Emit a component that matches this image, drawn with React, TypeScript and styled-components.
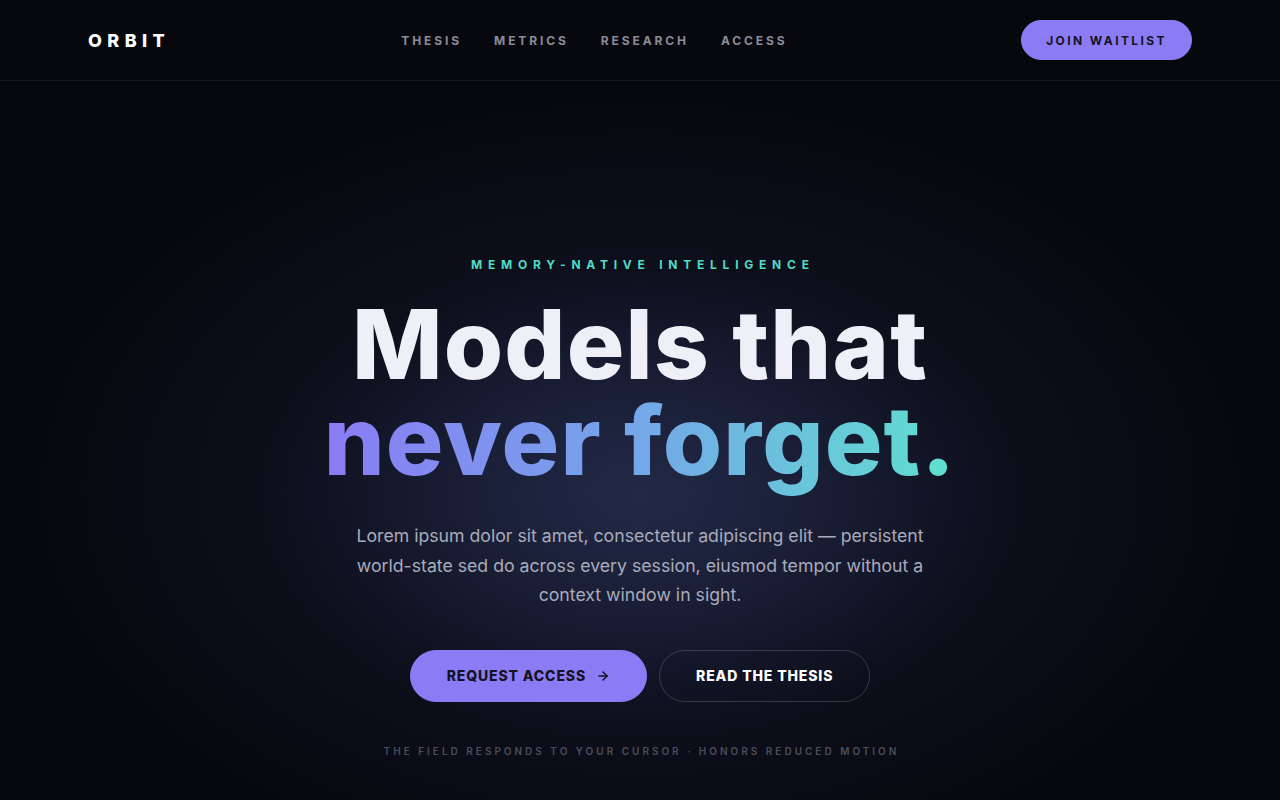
import React from "react";
import styled, { createGlobalStyle } from "styled-components";
import { ArrowRight } from "lucide-react";

const Global = createGlobalStyle`
  * { box-sizing: border-box; }
  html, body { margin: 0; padding: 0; background: #07080e; }
  body { font-family: Inter, "Noto Sans", sans-serif; color: #eeeef6; -webkit-font-smoothing: antialiased; }
`;

const Page = styled.div`
  min-height: 800px;
  display: flex;
  flex-direction: column;
  background:
    radial-gradient(ellipse 380px 240px at 640px 500px, rgba(38, 48, 82, 0.55) 0%, rgba(38, 48, 82, 0) 100%),
    radial-gradient(ellipse 620px 400px at 640px 490px, rgba(30, 34, 62, 0.9) 0%, rgba(20, 22, 42, 0.55) 50%, rgba(7, 8, 14, 0) 100%),
    #07080e;
`;

const Header = styled.header`
  height: 81px;
  display: flex;
  justify-content: space-between;
  align-items: center;
  padding: 0 88px;
  border-bottom: 1px solid rgba(255, 255, 255, 0.07);
  background: #07080e;
`;

const Logo = styled.div`
  font-family: Inter, sans-serif;
  font-weight: 800;
  font-size: 18px;
  letter-spacing: 0.3em;
  margin-right: -0.3em;
  color: #ffffff;
`;

const Nav = styled.nav`
  display: flex;
  gap: 35px;
`;

const NavLink = styled.a`
  font-size: 12px;
  font-weight: 700;
  letter-spacing: 0.24em;
  margin-right: -0.24em;
  color: #8a8b99;
  text-decoration: none;
`;

const PillButton = styled.button<{ $variant?: "solid" | "ghost"; $size?: "sm" | "lg" }>`
  display: inline-flex;
  align-items: center;
  justify-content: center;
  gap: 10px;
  border-radius: 999px;
  font-family: Inter, sans-serif;
  cursor: pointer;
  height: ${(p) => (p.$size === "lg" ? "52px" : "40px")};
  padding: ${(p) => (p.$size === "lg" ? "0 36px" : "0 24px")};
  font-size: ${(p) => (p.$size === "lg" ? "14px" : "12px")};
  font-weight: ${(p) => (p.$size === "lg" ? 800 : 700)};
  letter-spacing: ${(p) => (p.$size === "lg" ? "0.062em" : "0.2em")};
  background: ${(p) => (p.$variant === "ghost" ? "transparent" : "#8b7cf6")};
  color: ${(p) => (p.$variant === "ghost" ? "#ffffff" : "#15131f")};
  border: 1px solid ${(p) => (p.$variant === "ghost" ? "rgba(255,255,255,0.16)" : "#8b7cf6")};
`;

const Hero = styled.main`
  display: flex;
  flex-direction: column;
  align-items: center;
  text-align: center;
  padding-top: 176px;
`;

const Eyebrow = styled.div`
  font-size: 12px;
  font-weight: 700;
  letter-spacing: 0.48em;
  margin-right: -0.48em;
  color: #4fdcc8;
`;

const Headline = styled.h1`
  margin: 24px 0 0;
  font-family: Inter, sans-serif;
  font-weight: 800;
  font-size: 96px;
  line-height: 96px;
  letter-spacing: 0.012em;
  color: #efeff7;
`;

const Gradient = styled.span`
  background: linear-gradient(90deg, #8a7cf5 0%, #76a2ea 45%, #5fe0cf 100%);
  -webkit-background-clip: text;
  background-clip: text;
  color: transparent;
`;

const Lead = styled.p`
  margin: 33px 0 0;
  max-width: 580px;
  font-size: 17.7px;
  line-height: 29.5px;
  color: #a9abbb;
`;

const Actions = styled.div`
  display: flex;
  gap: 12px;
  margin-top: 40px;
`;

const Footnote = styled.div`
  margin-top: 43px;
  font-size: 10px;
  font-weight: 600;
  letter-spacing: 0.3em;
  margin-right: -0.3em;
  color: #4b4d5b;
`;

export default function App() {
  return (
    <>
      <Global />
      <Page>
        <Header>
          <Logo>ORBIT</Logo>
          <Nav>
            <NavLink href="#thesis">THESIS</NavLink>
            <NavLink href="#metrics">METRICS</NavLink>
            <NavLink href="#research">RESEARCH</NavLink>
            <NavLink href="#access">ACCESS</NavLink>
          </Nav>
          <PillButton $size="sm">JOIN WAITLIST</PillButton>
        </Header>
        <Hero>
          <Eyebrow>MEMORY-NATIVE INTELLIGENCE</Eyebrow>
          <Headline>
            Models that
            <br />
            <Gradient>never forget.</Gradient>
          </Headline>
          <Lead>
            Lorem ipsum dolor sit amet, consectetur adipiscing elit — persistent world-state sed do across
            every session, eiusmod tempor without a context window in sight.
          </Lead>
          <Actions>
            <PillButton $size="lg">
              REQUEST ACCESS <ArrowRight size={14} strokeWidth={2.5} />
            </PillButton>
            <PillButton $size="lg" $variant="ghost">
              READ THE THESIS
            </PillButton>
          </Actions>
          <Footnote>THE FIELD RESPONDS TO YOUR CURSOR · HONORS REDUCED MOTION</Footnote>
        </Hero>
      </Page>
    </>
  );
}
